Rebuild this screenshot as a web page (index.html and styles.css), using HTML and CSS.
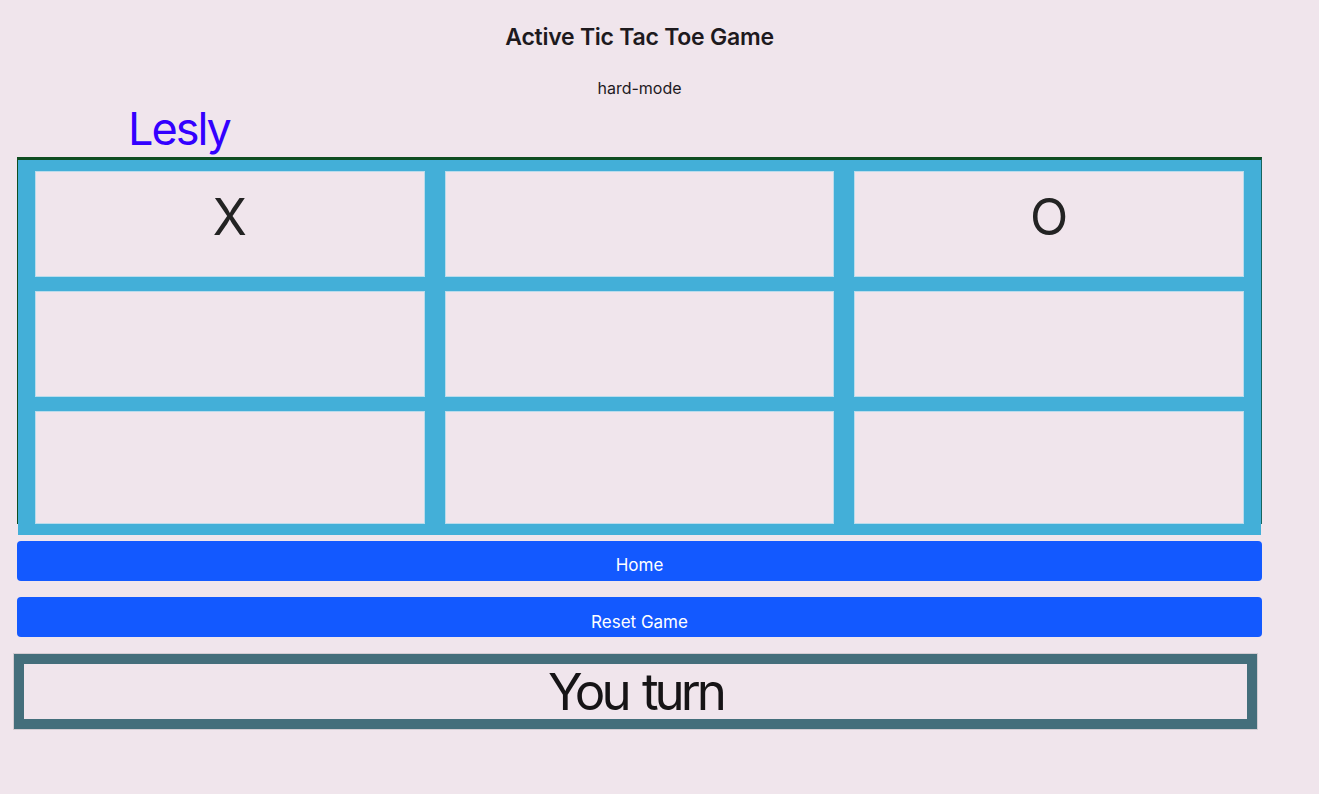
FILE: index.html
```html
<!DOCTYPE html>
<html lang="en">
<head>
<meta charset="utf-8">
<title>Active Tic Tac Toe Game</title>
<link rel="stylesheet" href="styles.css">
</head>
<body>
<main class="page">
  <h1 class="title">Active Tic Tac Toe Game</h1>
  <p class="mode">hard-mode</p>
  <div class="player">Lesly</div>
  <div class="board-wrap">
    <div class="board">
      <div class="cell">X</div>
      <div class="cell"></div>
      <div class="cell">O</div>
      <div class="cell"></div>
      <div class="cell"></div>
      <div class="cell"></div>
      <div class="cell"></div>
      <div class="cell"></div>
      <div class="cell"></div>
    </div>
  </div>
  <button class="btn btn-home">Home</button>
  <button class="btn btn-reset">Reset Game</button>
  <div class="status">You turn</div>
</main>
</body>
</html>
```
FILE: styles.css
```css
* { box-sizing: border-box; }
html, body { margin: 0; padding: 0; }
body {
  background: #f0e5ec;
  font-family: Inter, "Noto Sans", "Liberation Sans", sans-serif;
  color: #1e1a1e;
  width: 1319px;
  height: 794px;
  overflow: hidden;
}
.page {
  width: 1245px;
  margin-left: 17px;
  display: flex;
  flex-direction: column;
}
.title {
  margin: 23px 0 0;
  font-size: 23px;
  line-height: 28px;
  font-weight: 600;
  letter-spacing: -0.25px;
  text-align: center;
}
.mode {
  margin: 27px 0 0;
  font-size: 16px;
  line-height: 20px;
  text-align: center;
}
.player {
  margin: 6px 0 0 111px;
  font-size: 45px;
  line-height: 50px;
  letter-spacing: -2px;
  color: #3300ff;
}
.board-wrap {
  margin-top: 3px;
  height: 367px;
  border-top: 3px solid #0f4d21;
  border-left: 1px solid #0f4d21;
  border-right: 1px solid #17655e;
}
.board {
  display: grid;
  grid-template-columns: repeat(3, 1fr);
  grid-template-rows: 104px 104px 111px;
  column-gap: 22px;
  row-gap: 16px;
  padding: 12px 18px;
  background: #43afd8;
  height: 375px;
}
.cell {
  background: #f0e5ec;
  box-shadow: 0 0 0 1px #b9dcec;
  font-size: 50px;
  line-height: 60px;
  padding-top: 15px;
  text-align: center;
  color: #232323;
}
.btn {
  display: block;
  width: 100%;
  border: 0;
  border-radius: 4px;
  background: #1359ff;
  color: #ffffff;
  font-family: inherit;
  font-size: 17px;
  height: 40px;
  padding: 8px 0 0;
}
.btn-home { margin-top: 17px; }
.btn-reset { margin-top: 16px; padding-top: 10px; }
.status {
  margin: 17px 0 0 -3px;
  width: 1243px;
  height: 75px;
  border: 10px solid #446e7b;
  outline: 1px solid #d3ccd2;
  display: flex;
  align-items: center;
  justify-content: center;
  font-size: 51px;
  line-height: 1;
  letter-spacing: -4px;
  word-spacing: 4px;
  color: #161416;
}
```
